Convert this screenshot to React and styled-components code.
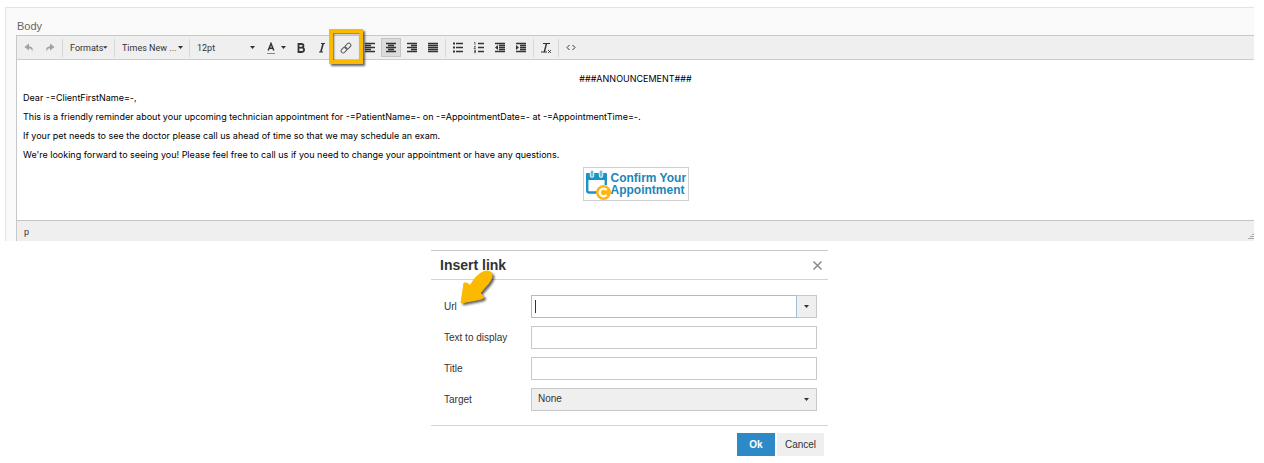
import React from 'react';
import styled, { createGlobalStyle } from 'styled-components';

const GlobalStyle = createGlobalStyle`
  *, *::before, *::after { box-sizing: border-box; }
  body {
    margin: 0;
    background: #fff;
    color: #333;
    font-family: "Liberation Sans", Arial, sans-serif;
    font-size: 10px;
  }
  button, input, select { font: inherit; color: inherit; margin: 0; border-radius: 0; }
  p { margin: 0; }
`;

const Page = styled.main`
  padding: 7px 10px 0 5px;
`;

const Panel = styled.section`
  padding: 12px 0 0 10px;
  border: solid #e4e4e4;
  border-width: 1px 0 0 1px;
  background: #fafafa;
`;

const PanelTitle = styled.h2`
  margin: 0 0 3px 1px;
  font-size: 11px;
  font-weight: 400;
  line-height: 12px;
  color: #666;
`;

const Editor = styled.div`
  border: solid #c8c8c8;
  border-width: 1px 0 0 1px;
  background: #fff;
`;

const Toolbar = styled.div`
  display: flex;
  align-items: center;
  height: 24px;
  border-bottom: 1px solid #ccc;
  background: #efefef;
`;

const Group = styled.div`
  display: flex;
  align-items: center;
  gap: 1px;
  height: 18px;
  padding: 0 2px;

  ${(p) => p.$divided && 'border-left: 1px solid #d6d6d6;'}
`;

const Tool = styled.button`
  position: relative;
  display: flex;
  align-items: center;
  justify-content: center;
  width: 20px;
  height: 19px;
  padding: 0;
  border: 1px solid ${(p) => (p.$active ? '#c4c4c4' : 'transparent')};
  background: ${(p) => (p.$active ? '#dbdbdb' : 'transparent')};
  color: ${(p) => (p.disabled ? '#a0a0a0' : '#333')};
`;

const WideTool = styled(Tool)`
  justify-content: space-between;
  width: ${(p) => p.$width}px;
  padding: 0 3px 0 4px;
  font-size: 9px;
  font-family: Roboto, Arial, sans-serif;
  white-space: nowrap;
`;

const Highlight = styled.span`
  position: absolute;
  z-index: 1;
  inset: -10px -8px -8px;
  border: 4px solid #fbb900;
  box-shadow: 2px 2px 2px rgba(0, 0, 0, 0.6), inset 1px 1px 2px rgba(0, 0, 0, 0.6);
`;

const Content = styled.div`
  display: flex;
  flex-direction: column;
  min-height: 160px;
  padding: 9px 6px 19px;
  color: #000;
  font-family: Inter, Verdana, sans-serif;
  font-size: 9px;
  line-height: 19px;
`;

const Centered = styled.p`
  text-align: center;
`;

const ConfirmLink = styled.a`
  display: flex;
  align-items: center;
  align-self: center;
  width: 106px;
  height: 34px;
  margin-top: 3px;
  border: 1px solid #d0d0d0;
  color: #1c86b8;
  font-family: "Liberation Sans", Arial, sans-serif;
  font-size: 12px;
  font-weight: 700;
  line-height: 12px;
  text-decoration: none;
  white-space: nowrap;
`;

const ConfirmLine = styled.span`
  display: block;
`;

const StatusBar = styled.div`
  display: flex;
  justify-content: space-between;
  height: 21px;
  padding: 6px 0 2px 7px;
  border-top: 1px solid #c4c4c4;
  background: #efefef;
  font-size: 9px;
  line-height: 10px;
`;

const ResizeGrip = styled.svg`
  align-self: flex-end;
`;

const Dialog = styled.form`
  width: 397px;
  max-width: 100%;
  margin: 9px auto 0;
  border-top: 1px solid #c8c8c8;
`;

const DialogHeader = styled.header`
  display: flex;
  align-items: center;
  justify-content: space-between;
  height: 29px;
  padding: 0 5px 0 9px;
  border-bottom: 1px solid #d4d4d4;
`;

const DialogTitle = styled.h3`
  margin: 0;
  font-size: 14px;
  line-height: 16px;
`;

const CloseButton = styled.button`
  display: flex;
  padding: 0;
  border: 0;
  background: none;
`;

const Fields = styled.div`
  display: flex;
  flex-direction: column;
  gap: 8px;
  padding: 15px 11px 14px 13px;
  border-bottom: 1px solid #d4d4d4;
`;

const Field = styled.div`
  display: grid;
  grid-template-columns: 87px 1fr;
  align-items: center;
`;

const Label = styled.label`
  position: relative;
`;

const TextInput = styled.input`
  width: 100%;
  min-width: 0;
  height: 23px;
  padding: 0 6px;
  border: 1px solid #c8c8c8;
  background: #fff;
  outline: 0;
`;

const Combo = styled.div`
  display: flex;
`;

const UrlInput = styled(TextInput)`
  border-color: #a3bfd6;
  background: linear-gradient(#333, #333) 3px 4px / 1px 13px no-repeat #fff;
`;

const ComboButton = styled.button`
  display: flex;
  align-items: center;
  justify-content: center;
  width: 20px;
  flex: none;
  padding: 0;
  border: 1px solid #c8c8c8;
  border-left: 0;
  background: #efefef;
`;

const SelectBox = styled.div`
  position: relative;
`;

const Select = styled.select`
  appearance: none;
  display: block;
  width: 100%;
  height: 23px;
  padding: 0 6px 2px;
  border: 1px solid #c8c8c8;
  background: #efefef;
`;

const SelectCaret = styled.span`
  position: absolute;
  top: 0;
  right: 8px;
  display: flex;
  align-items: center;
  height: 100%;
  pointer-events: none;
`;

const Pointer = styled.svg`
  position: absolute;
  left: 16px;
  bottom: 7px;
  overflow: visible;
  filter: drop-shadow(2px 2px 1px rgba(0, 0, 0, 0.6));
`;

const Actions = styled.footer`
  display: flex;
  justify-content: flex-end;
  gap: 2px;
  padding: 7px 4px;
`;

const ActionButton = styled.button`
  width: ${(p) => (p.$primary ? 38 : 47)}px;
  height: 23px;
  padding: 0;
  border: 0;
  background: ${(p) => (p.$primary ? '#2d8ac7' : '#efefef')};
  color: ${(p) => (p.$primary ? '#fff' : '#333')};
  font-weight: ${(p) => (p.$primary ? 700 : 400)};
`;

const Caret = () => (
  <svg width="5" height="3" viewBox="0 0 5 3" aria-hidden="true">
    <path d="M0 0h5L2.5 3z" fill="#333" />
  </svg>
);

const Icon = ({ children }) => (
  <svg width="12" height="12" viewBox="0 0 12 12" fill="none" stroke="currentColor" aria-hidden="true">
    {children}
  </svg>
);

const UndoIcon = () => (
  <Icon><path d="M6 4.500V1.500L1.500 5 6 8.500V6.300C8 6.300 8.800 7.500 9 9.500 10.500 7 9.500 4.500 6 4.500z" fill="currentColor" stroke="none" /></Icon>
);
const RedoIcon = () => (
  <Icon><path d="M6 4.500V1.500L10.500 5 6 8.500V6.300C4 6.300 3.200 7.500 3 9.500 1.500 7 2.500 4.500 6 4.500z" fill="currentColor" stroke="none" /></Icon>
);
const LinkIcon = () => (
  <Icon>
    <g transform="rotate(-45 6 6)" stroke="#555">
      <rect x="0" y="4" width="6.500" height="4" rx="2" />
      <rect x="5.500" y="4" width="6.500" height="4" rx="2" />
    </g>
  </Icon>
);

const alignments = {
  left: 'M1 1.500h10M1 3.500h6M1 5.500h10M1 7.500h6M1 9.500h10',
  center: 'M1 1.500h10M3 3.500h6M1 5.500h10M3 7.500h6M1 9.500h10',
  right: 'M1 1.500h10M5 3.500h6M1 5.500h10M5 7.500h6M1 9.500h10',
  justify: 'M1 1.500h10M1 3.500h10M1 5.500h10M1 7.500h10M1 9.500h10',
};
const AlignIcon = ({ type }) => <Icon><path d={alignments[type]} strokeWidth="1.300" /></Icon>;

const BulletsIcon = () => (
  <Icon>
    <path d="M4 1.500h7M4 5.500h7M4 9.500h7" strokeWidth="1.300" />
    <path d="M1 1.500h2M1 5.500h2M1 9.500h2" strokeWidth="2" />
  </Icon>
);
const NumbersIcon = () => (
  <Icon>
    <path d="M5 1.500h6M5 5.500h6M5 9.500h6" strokeWidth="1.300" />
    <path d="M1 .5h1v2.500M1 4.500h1.500L1 6.700h2M1 8.300h1.500v2.400H1M1 9.500h1.500" strokeWidth="0.700" />
  </Icon>
);
const IndentIcon = ({ outward }) => (
  <Icon>
    <path d="M1 1.500h10M5 3.500h6M5 5.500h6M5 7.500h6M1 9.500h10" strokeWidth="1.300" />
    <path d={outward ? 'M4 3v5L1 5.500z' : 'M1 3v5l3-2.500z'} fill="currentColor" stroke="none" />
  </Icon>
);
const BoldIcon = () => (
  <Icon><path d="M3.500 2h3c2.600 0 2.600 3.700 0 3.700h-3zM3.500 5.700h3.300c3 0 3 4.300 0 4.300H3.500z" strokeWidth="1.800" /></Icon>
);
const ItalicIcon = () => (
  <Icon><path d="M5 1.500h4M3 10h4" /><path d="M7.200 1.500L4.800 10" strokeWidth="1.600" /></Icon>
);
const ColorIcon = () => (
  <Icon>
    <path d="M3.200 8.500L6 1.500l2.800 7M4.200 6.200h3.600" strokeWidth="1.500" />
    <path d="M2 11.500h8" stroke="#888" />
  </Icon>
);
const ClearIcon = () => (
  <Icon>
    <path d="M3 1.500h7M1 10h6" />
    <path d="M6.500 1.500L4.300 10" strokeWidth="1.400" />
    <path d="M8 8l3 3M11 8l-3 3" strokeWidth="0.900" />
  </Icon>
);
const CodeIcon = () => (
  <Icon><path d="M4.500 3L2 5.500 4.500 8M7.500 3L10 5.500 7.500 8" /></Icon>
);

const CalendarLogo = () => (
  <svg width="27" height="32" viewBox="0 0 27 32" aria-hidden="true">
    <path d="M2 6q0-1 1-1h19q1 0 1 1v6H2z" fill="#1c93c4" />
    <path d="M3.200 8v14.500q0 2 2 2H13M21.800 8v9" fill="none" stroke="#1c93c4" strokeWidth="2.400" />
    <path d="M8 4v3.500M17 4v3.500" stroke="#fff" strokeWidth="4.400" strokeLinecap="round" />
    <path d="M8 4v3.500M17 4v3.500" stroke="#6dbbdc" strokeWidth="2.800" strokeLinecap="round" />
    <circle cx="19.500" cy="24.500" r="7.500" fill="#fcb61a" />
    <path d="M22.500 22.200a3.800 3.800 0 1 0 0 4.600" fill="none" stroke="#fff" strokeWidth="2.200" />
  </svg>
);

export default function App() {
  return (
    <>
      <GlobalStyle />
      <Page>
        <Panel>
          <PanelTitle>Body</PanelTitle>
          <Editor>
            <Toolbar role="toolbar" aria-label="Formatting">
              <Group>
                <Tool disabled aria-label="Undo"><UndoIcon /></Tool>
                <Tool disabled aria-label="Redo"><RedoIcon /></Tool>
              </Group>
              <Group $divided>
                <WideTool $width={47}>Formats<Caret /></WideTool>
              </Group>
              <Group $divided>
                <WideTool $width={70}>Times New ...<Caret /></WideTool>
              </Group>
              <Group $divided>
                <WideTool $width={67}>12pt<Caret /></WideTool>
                <WideTool $width={30} aria-label="Text color"><ColorIcon /><Caret /></WideTool>
                <Tool aria-label="Bold"><BoldIcon /></Tool>
                <Tool aria-label="Italic"><ItalicIcon /></Tool>
              </Group>
              <Group>
                <Tool aria-label="Insert link"><LinkIcon /><Highlight /></Tool>
              </Group>
              <Group>
                <Tool aria-label="Align left"><AlignIcon type="left" /></Tool>
                <Tool $active aria-label="Align center"><AlignIcon type="center" /></Tool>
                <Tool aria-label="Align right"><AlignIcon type="right" /></Tool>
                <Tool aria-label="Justify"><AlignIcon type="justify" /></Tool>
              </Group>
              <Group $divided>
                <Tool aria-label="Bullet list"><BulletsIcon /></Tool>
                <Tool aria-label="Numbered list"><NumbersIcon /></Tool>
                <Tool aria-label="Decrease indent"><IndentIcon outward /></Tool>
                <Tool aria-label="Increase indent"><IndentIcon /></Tool>
              </Group>
              <Group $divided>
                <Tool aria-label="Clear formatting"><ClearIcon /></Tool>
              </Group>
              <Group $divided>
                <Tool aria-label="Source code"><CodeIcon /></Tool>
              </Group>
            </Toolbar>
            <Content>
              <Centered>###ANNOUNCEMENT###</Centered>
              <p>Dear -=ClientFirstName=-,</p>
              <p>This is a friendly reminder about your upcoming technician appointment for -=PatientName=- on -=AppointmentDate=- at -=AppointmentTime=-.</p>
              <p>If your pet needs to see the doctor please call us ahead of time so that we may schedule an exam.</p>
              <p>We're looking forward to seeing you! Please feel free to call us if you need to change your appointment or have any questions.</p>
              <ConfirmLink href="#confirm">
                <CalendarLogo />
                <span>
                  <ConfirmLine>Confirm Your</ConfirmLine>
                  <ConfirmLine>Appointment</ConfirmLine>
                </span>
              </ConfirmLink>
            </Content>
            <StatusBar>
              <span>p</span>
              <ResizeGrip width="6" height="6" viewBox="0 0 6 6" aria-hidden="true">
                <path d="M0 5.500h6M2 3.500h4M4 1.500h2" stroke="#aaa" />
              </ResizeGrip>
            </StatusBar>
          </Editor>
        </Panel>

        <Dialog aria-labelledby="dialog-title" onSubmit={(e) => e.preventDefault()}>
          <DialogHeader>
            <DialogTitle id="dialog-title">Insert link</DialogTitle>
            <CloseButton type="button" aria-label="Close">
              <svg width="11" height="11" viewBox="0 0 11 11" aria-hidden="true">
                <path d="M1.500 1.500l8 8M9.500 1.500l-8 8" stroke="#888" strokeWidth="1.500" />
              </svg>
            </CloseButton>
          </DialogHeader>
          <Fields>
            <Field>
              <Label htmlFor="url">
                Url
                <Pointer width="34" height="36" viewBox="0 0 34 36" aria-hidden="true">
                  <path d="M1 34L4 14q3-1 6 3C13 11 18 5 23 3q6-3 9 2 1 4-4 10L20 24l4 4q-1 2-5 2.500z" fill="#fbb900" stroke="#fbb900" strokeLinejoin="round" />
                </Pointer>
              </Label>
              <Combo>
                <UrlInput id="url" type="text" />
                <ComboButton type="button" aria-label="Choose link"><Caret /></ComboButton>
              </Combo>
            </Field>
            <Field>
              <Label htmlFor="text">Text to display</Label>
              <TextInput id="text" type="text" />
            </Field>
            <Field>
              <Label htmlFor="title">Title</Label>
              <TextInput id="title" type="text" />
            </Field>
            <Field>
              <Label htmlFor="target">Target</Label>
              <SelectBox>
                <Select id="target" defaultValue="none">
                  <option value="none">None</option>
                  <option value="blank">New window</option>
                </Select>
                <SelectCaret><Caret /></SelectCaret>
              </SelectBox>
            </Field>
          </Fields>
          <Actions>
            <ActionButton $primary type="submit">Ok</ActionButton>
            <ActionButton type="button">Cancel</ActionButton>
          </Actions>
        </Dialog>
      </Page>
    </>
  );
}
